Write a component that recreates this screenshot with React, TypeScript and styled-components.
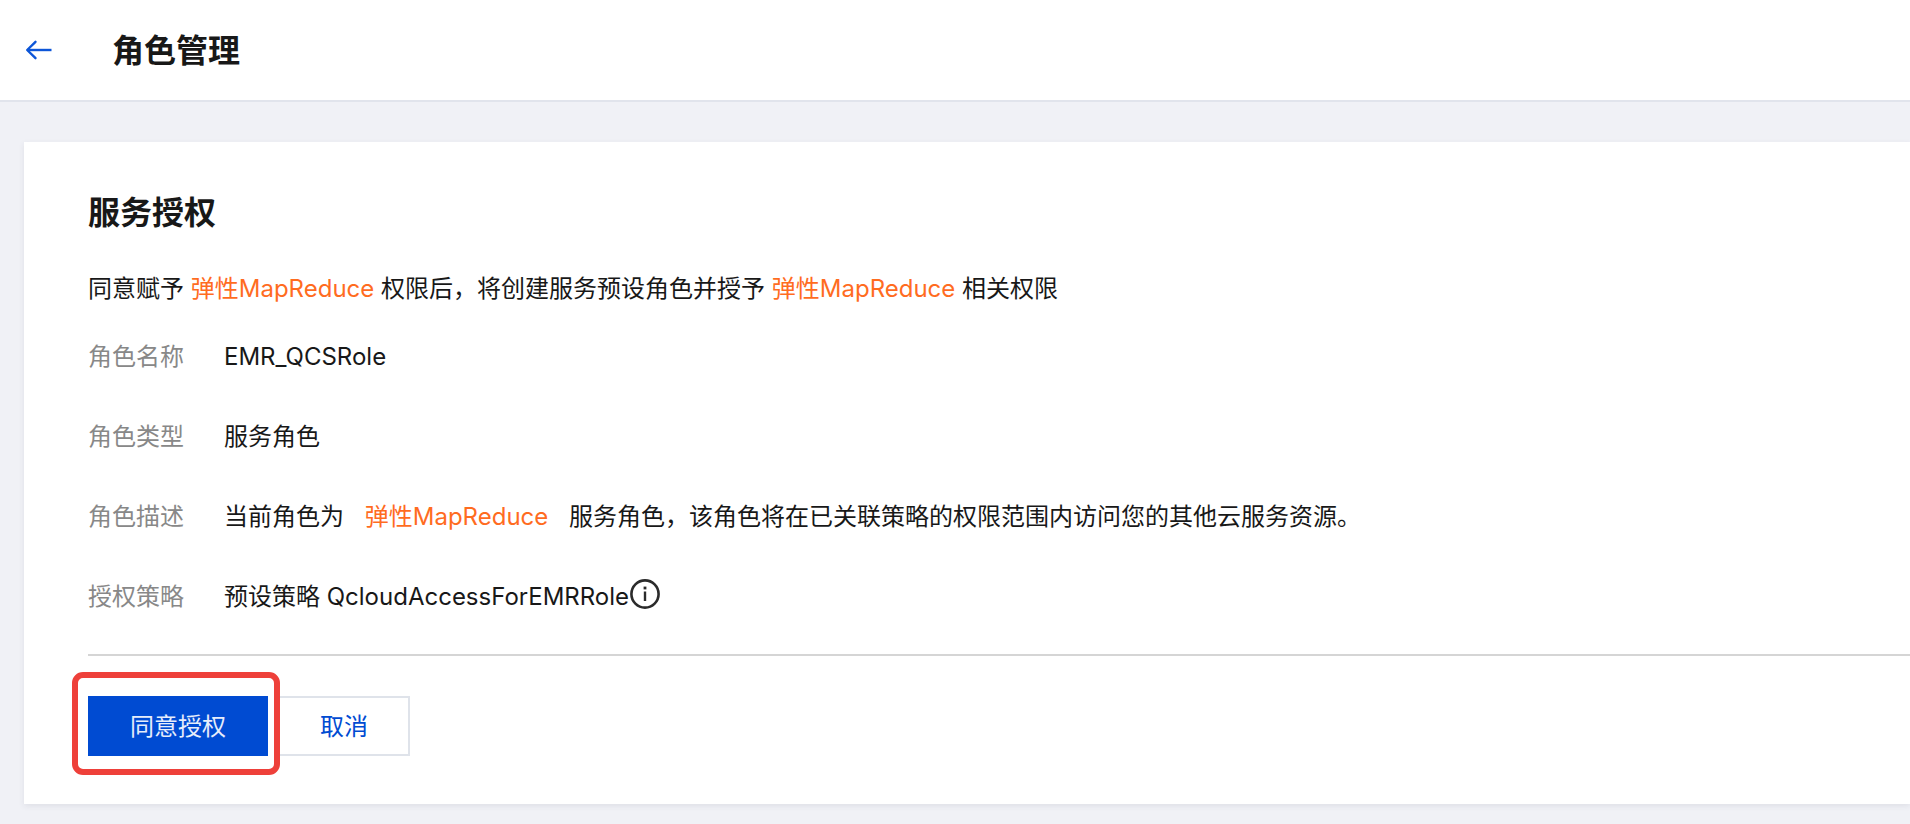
import React from "react";
import styled, { createGlobalStyle } from "styled-components";

const GlobalStyle = createGlobalStyle`
  *, *::before, *::after { box-sizing: border-box; }
  body {
    margin: 0;
    background: #f0f1f6;
    color: #181818;
    font-family: Inter, "Noto Sans CJK SC", sans-serif;
    font-size: 24px;
    line-height: 40px;
  }
`;

const Page = styled.div`
  min-height: 100vh;
  overflow-x: hidden;
`;

const Header = styled.header`
  display: flex;
  align-items: center;
  gap: 60px;
  height: 102px;
  padding: 0 24px;
  background: #fff;
  border-bottom: 2px solid #e1e4ec;
`;

const BackLink = styled.a`
  display: flex;
  color: #0d56d8;
`;

const Heading = styled.h1`
  margin: 0;
  padding-top: 2px;
  font-size: 32px;
  line-height: 48px;
  font-weight: 700;
`;

const Main = styled.main`
  padding: 40px 0 20px 24px;
`;

const Card = styled.section`
  padding: 45px 0 48px 64px;
  background: #fff;
  box-shadow: 0 2px 6px rgba(54, 58, 80, 0.09);
`;

const CardTitle = styled(Heading).attrs({ as: "h2" })``;

const Intro = styled.p`
  margin: 32px 0 28px;
`;

const Product = styled.span<{ $spaced?: boolean }>`
  margin: 0 ${(p) => (p.$spaced ? "14px" : "0")};
  color: #ff6c1f;
`;

const Details = styled.dl`
  display: grid;
  grid-template-columns: 96px 1fr;
  gap: 40px;
  margin: 0;
  padding-bottom: 37px;
  border-bottom: 2px solid #d5d5d5;
`;

const Label = styled.dt`
  color: #888;
`;

const Value = styled.dd`
  display: flex;
  align-items: center;
  margin: 0;
`;

const InfoButton = styled.button`
  display: flex;
  padding: 0 0 6px;
  border: 0;
  background: none;
  color: #2b2b2b;
  cursor: pointer;
`;

const Actions = styled.div`
  display: flex;
  gap: 10px;
  padding-top: 40px;
`;

const Button = styled.button<{ $primary?: boolean }>`
  height: 60px;
  padding: 2px 40px 0;
  border: 2px solid ${(p) => (p.$primary ? "#004bd2" : "#dfe3ea")};
  background: ${(p) => (p.$primary ? "#004bd2" : "#fff")};
  color: ${(p) => (p.$primary ? "#e6edfb" : "#004bd2")};
  font: inherit;
  cursor: pointer;
`;

const Highlighted = styled.div`
  position: relative;
  display: flex;

  &::after {
    content: "";
    position: absolute;
    inset: -24px -12px -19px -16px;
    border: 6px solid #ee403a;
    border-radius: 11px;
    pointer-events: none;
  }
`;

const ArrowIcon = () => (
  <svg width="28" height="20" viewBox="0 0 28 20" fill="none" stroke="currentColor" strokeWidth="2.4" aria-hidden="true">
    <path d="M11.5 1.8 3.2 10l8.3 8.2" strokeLinecap="round" strokeLinejoin="round" />
    <path d="M3.2 10h24.3" />
  </svg>
);

const InfoIcon = () => (
  <svg width="32" height="32" viewBox="0 0 32 32" fill="none" stroke="currentColor" aria-hidden="true">
    <circle cx="16" cy="16" r="13.6" strokeWidth="2.6" />
    <path d="M16 13.5v9.5" strokeWidth="2.4" />
    <path d="M16 8.6v2.8" strokeWidth="2.8" />
  </svg>
);

const PRODUCT = "弹性MapReduce";

export default function App() {
  return (
    <Page>
      <GlobalStyle />
      <Header>
        <BackLink href="#" aria-label="返回">
          <ArrowIcon />
        </BackLink>
        <Heading>角色管理</Heading>
      </Header>
      <Main>
        <Card>
          <CardTitle>服务授权</CardTitle>
          <Intro>
            同意赋予 <Product>{PRODUCT}</Product> 权限后，将创建服务预设角色并授予{" "}
            <Product>{PRODUCT}</Product> 相关权限
          </Intro>
          <Details>
            <Label>角色名称</Label>
            <Value>EMR_QCSRole</Value>
            <Label>角色类型</Label>
            <Value>服务角色</Value>
            <Label>角色描述</Label>
            <Value>
              <span>
                当前角色为 <Product $spaced>{PRODUCT}</Product> 服务角色，该角色将在已关联策略的权限范围内访问您的其他云服务资源。
              </span>
            </Value>
            <Label>授权策略</Label>
            <Value>
              预设策略 QcloudAccessForEMRRole
              <InfoButton type="button" aria-label="策略说明">
                <InfoIcon />
              </InfoButton>
            </Value>
          </Details>
          <Actions>
            <Highlighted>
              <Button type="button" $primary>同意授权</Button>
            </Highlighted>
            <Button type="button">取消</Button>
          </Actions>
        </Card>
      </Main>
    </Page>
  );
}
